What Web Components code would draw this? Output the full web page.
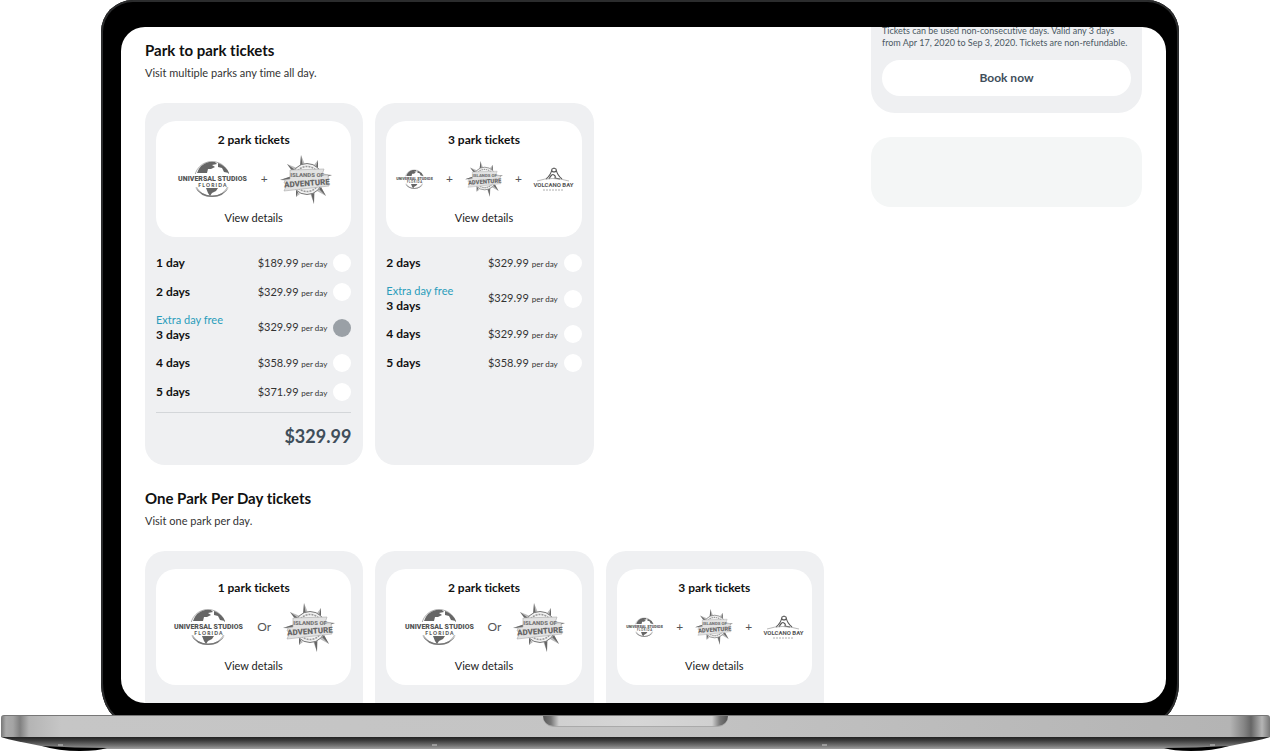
<!DOCTYPE html>
<html lang="en">
<head>
<meta charset="utf-8">
<meta name="viewport" content="width=device-width, initial-scale=1">
<title>Park tickets</title>
<style>
  html, body { margin: 0; height: 100%; background: #fff; overflow: hidden; }
  body { font-family: Lato, "Open Sans", sans-serif; font-variant-ligatures: no-common-ligatures; color: #111; }
</style>
</head>
<body>
<laptop-frame>
  <ticket-page></ticket-page>
</laptop-frame>
<script>
const define = (name, html) => {
  customElements.define(name, class extends HTMLElement {
    connectedCallback() {
      if (this.shadowRoot) return;
      const tpl = document.createElement('template');
      tpl.innerHTML = typeof html === 'function' ? html(this) : html;
      this.attachShadow({ mode: 'open' }).append(tpl.content.cloneNode(true));
    }
  });
};

define('laptop-frame', `
<style>
  :host { display: flex; flex-direction: column; height: 100vh; }
  .lid { flex: 1; min-height: 0; box-sizing: border-box; margin: 0 92px -8px 101px; padding: 27px 13px 20px 20px;
    background: #000; border-radius: 32px 32px 28px 28px / 32px 32px 40px 40px; box-shadow: inset 0 0 0 2px #2b2c2d; }
  .screen { height: 100%; overflow: hidden; border-radius: 24px; background: #fff; }
  .base { position: relative; flex: none; height: 22px; margin: 0 1px; border-radius: 3px 3px 0 0; box-sizing: border-box; border-top: 1px solid #777;
    background: linear-gradient(90deg, #777 0, #aaa 5px, #a4a4a4 12px, #808080 19px, #b4b4b4 28px, #c6c6c6 60px, #c4c4c4 50%, #b4b4b4 calc(100% - 40px), #858585 calc(100% - 26px), #666 calc(100% - 19px), #b5b5b5 calc(100% - 8px), #777 100%); }
  .notch { width: 185px; height: 10px; margin: 0 auto; border-radius: 0 0 12px 12px; box-shadow: 0 1px 0 #aaa;
    background: linear-gradient(90deg, #555 0, #777 8px, #d0d0d0 16px, #d6d6d6 50%, #d0d0d0 calc(100% - 16px), #777 calc(100% - 8px), #555 100%); }
  .under { flex: none; height: 15px; }
  svg { display: block; width: 100%; height: 15px; }
</style>
<div class="lid"><div class="screen"><slot></slot></div></div>
<div class="base"><div class="notch"></div></div>
<div class="under">
  <svg viewBox="0 0 1271 15" preserveAspectRatio="none" aria-hidden="true">
    <defs><linearGradient id="g" x1="0" y1="0" x2="0" y2="1"><stop offset="0" stop-color="#222"/><stop offset=".3" stop-color="#3c3c3c"/><stop offset=".7" stop-color="#707070"/><stop offset="1" stop-color="#a0a0a0"/></linearGradient></defs>
    <path d="M1 0H1270Q1266 2 1230 9Q1212 12 1160 12H111Q59 12 41 9Q5 2 1 0Z" fill="url(#g)"/>
    <path d="M42 9Q58 14 80 14Q98 14 107 11Q75 11 42 9ZM1229 9Q1213 14 1191 14Q1173 14 1164 11Q1196 11 1229 9Z" fill="#000"/>
    <path d="M58 8h5M432 8h5M822 8h5M1210 8h5" stroke="#ccc"/>
  </svg>
</div>`);

define('ticket-page', `
<style>
  :host { display: grid; grid-template-columns: minmax(0, 1fr) 271px; gap: 47px; padding: 0 24px; align-items: start; }
  main { display: grid; gap: 23px; padding-top: 13px; }
  aside { display: grid; gap: 24px; }
  .promo { height: 70px; border-radius: 20px; background: #f4f6f6; }
</style>
<main>
  <ticket-section heading="Park to park tickets" note="Visit multiple parks any time all day.">
    <ticket-card heading="2 park tickets" parks="universal + adventure" total="$329.99" chosen="3 days"
      prices="1 day=$189.99;2 days=$329.99;3 days=$329.99=Extra day free;4 days=$358.99;5 days=$371.99"></ticket-card>
    <ticket-card heading="3 park tickets" parks="universal + adventure + volcano"
      prices="2 days=$329.99;3 days=$329.99=Extra day free;4 days=$329.99;5 days=$358.99"></ticket-card>
  </ticket-section>
  <ticket-section heading="One Park Per Day tickets" note="Visit one park per day.">
    <ticket-card heading="1 park tickets" parks="universal Or adventure"></ticket-card>
    <ticket-card heading="2 park tickets" parks="universal Or adventure"></ticket-card>
    <ticket-card heading="3 park tickets" parks="universal + adventure + volcano"></ticket-card>
  </ticket-section>
</main>
<aside>
  <booking-card>Tickets can be used non-consecutive days. Valid any 3 days from Apr 17, 2020 to Sep 3, 2020. Tickets are non-refundable.</booking-card>
  <div class="promo"></div>
</aside>`);

define('booking-card', `
<style>
  :host { display: block; padding: 0 11px 17px; border-radius: 0 0 24px 24px; background: #eff0f2; color: #4b5963; }
  p { margin: -2px 0 11px; font-size: 9px; line-height: 12px; }
  button { display: block; width: 100%; height: 36px; border: 0; border-radius: 18px; background: #fff; color: #3f4e5a; font: 700 12px/16px Lato, sans-serif; }
</style>
<p><slot></slot></p>
<button type="button">Book now</button>`);

define('ticket-section', el => `
<style>
  :host { display: block; }
  h2 { margin: 0; font-size: 15px; line-height: 20px; font-weight: 700; }
  p { margin: 4px 0 21px; font-size: 11px; line-height: 18px; color: #333; }
  .cards { display: grid; grid-template-columns: repeat(3, minmax(0, 1fr)); gap: 12px; }
</style>
<h2>${el.getAttribute('heading')}</h2>
<p>${el.getAttribute('note')}</p>
<div class="cards"><slot></slot></div>`);

define('ticket-card', el => {
  const parts = el.getAttribute('parks').split(' ');
  const small = parts.length > 3;
  const chosen = el.getAttribute('chosen');
  const rows = (el.getAttribute('prices') || '').split(';').filter(Boolean).map((r, i) => {
    const [days, price, extra] = r.split('=');
    return `<label class="row" for="o${i}"><span class="days">${extra ? `<em>${extra}</em>` : ''}<b>${days}</b></span>
      <span class="price">${price} <small>per day</small></span>
      <input type="radio" name="days" id="o${i}"${days === chosen ? ' checked' : ''}></label>`;
  }).join('');
  const total = el.getAttribute('total');
  return `
<style>
  :host { display: block; padding: 18px 12px 18px 11px; border-radius: 20px; background: #eff0f2; }
  .top { display: grid; grid-template-rows: 16px 48px 16px; row-gap: 7px; padding: 11px 0; justify-items: center; border-radius: 20px; background: #fff; }
  h3 { margin: 0; font-size: 12px; line-height: 16px; font-weight: 700; }
  .logos { display: flex; align-items: center; gap: 12px; font-size: 12px; line-height: 16px; color: #555; }
  a { font-size: 11px; line-height: 16px; color: #222; text-decoration: none; }
  .rows { display: grid; gap: 11px; padding-top: 17px; }
  .row { display: grid; grid-template-columns: 1fr auto 18px; align-items: center; column-gap: 6px; min-height: 18px; }
  .days { display: grid; font-size: 12px; line-height: 16px; }
  em { font-style: normal; font-size: 11px; line-height: 15px; color: #2a9dbb; }
  .price { font-size: 11px; line-height: 16px; color: #333; }
  small { font-size: 8px; }
  input { appearance: none; width: 18px; height: 18px; margin: 0; border-radius: 50%; background: #fff; }
  input:checked { background: #9aa0a6; }
  .total { display: block; margin-top: 11px; padding-top: 12px; border-top: 1px solid #d3d6d9; text-align: right; font-size: 18px; line-height: 22px; font-weight: 700; color: #3f4e5a; }
</style>
<div class="top"><h3>${el.getAttribute('heading')}</h3>
<div class="logos">${parts.map(p => p.length > 2 ? `<park-logo park="${p}"${small ? ' small' : ''}></park-logo>` : `<span>${p}</span>`).join('')}</div>
<a href="#details">View details</a></div>
<div class="rows">${rows}</div>${total ? `<output class="total">${total}</output>` : ''}`;
});

const logos = {
  universal: { w: 73, h: 38, sw: 39, svg: `
    <circle cx="36" cy="19" r="17.5" fill="none" stroke="#888" stroke-width=".7"/>
    <path d="M21 13Q24 4 33 2L39 2L41 4L36 5L39 7L35 9L32 9L31 13ZM42 3Q50 6 53 13L48 12L46 8L42 7ZM30 28L42 28L40 31L36 33L34 36L32 33Z" fill="#666"/>
    <path d="M19 27Q24 37 36 37Q48 37 53 27Q47 35.5 36 35.5Q26 35.5 19 27Z" fill="#777"/>
    <path d="M0 14H73V21H54V27H18V21H0Z" fill="#fff"/>
    <text x="36.5" y="21" text-anchor="middle" font-family="Roboto" font-weight="900" font-size="7" fill="#555">UNIVERSAL STUDIOS</text>
    <text x="36.5" y="27" text-anchor="middle" font-family="Lato" font-weight="900" font-size="5" fill="#555">F L O R I D A</text>` },
  adventure: { w: 52, h: 49, sw: 38, svg: `
    <path d="M21 0L26 12H20ZM34 49L35 36L30 38ZM52 20L40 18V24ZM0 25L12 26V21ZM7 9L17 13L13 17ZM46 41L41 32L37 36ZM38 5L34 10L38 13ZM16 42L20 39L16 35Z" fill="#bbb"/>
    <path d="M21 0L20 12L23 12ZM34 49L34 37L31 38ZM52 20L41 21V24ZM0 25L12 24V21ZM7 9L15 15L13 17ZM46 41L41 32L39 34ZM38 5L36 12L38 13ZM16 42L18 37L16 35Z" fill="#666"/>
    <circle cx="27" cy="24" r="15.5" fill="#f2f2f2" stroke="#777" stroke-width="1"/>
    <circle cx="27" cy="24" r="12.5" fill="none" stroke="#999" stroke-width="1.5" stroke-dasharray="2 1"/>
    <path d="M10 15L44 14L42 20L48 20L49 31L4 36L7 29L4 28L5 25L10 24Z" fill="#e2e2e2" stroke="#aaa" stroke-width=".6"/>
    <text x="27" y="22" text-anchor="middle" font-family="Roboto" font-weight="900" font-size="6" fill="#777">ISLANDS OF</text>
    <text x="27" y="31" text-anchor="middle" font-family="Roboto" font-weight="900" font-size="8" fill="#666" transform="rotate(-4 27 29)">ADVENTURE</text>` },
  volcano: { w: 39, h: 24, sw: 39, svg: `
    <path d="M12 12Q17 8 18 2L20 1L22 2Q23 8 28 12M18 4Q20 6 22 4M15 12Q18 6 20 8Q22 9 21 11L26 12" fill="none" stroke="#555" stroke-width="1.1"/>
    <path d="M3 14Q18 9 35 14" fill="none" stroke="#999" stroke-width=".7"/>
    <text x="19.5" y="20" text-anchor="middle" font-family="Roboto" font-weight="700" font-size="6" fill="#555">VOLCANO BAY</text>
    <path d="M9 23H30" stroke="#999" stroke-width=".8" stroke-dasharray="2 1"/>` }
};
define('park-logo', el => {
  const l = logos[el.getAttribute('park')];
  return `<style>:host { display: block; } svg { display: block; overflow: visible; height: auto; }</style>
<svg width="${el.hasAttribute('small') ? l.sw : l.w}" viewBox="0 0 ${l.w} ${l.h}" aria-hidden="true">${l.svg}</svg>`;
});
</script>
</body>
</html>
